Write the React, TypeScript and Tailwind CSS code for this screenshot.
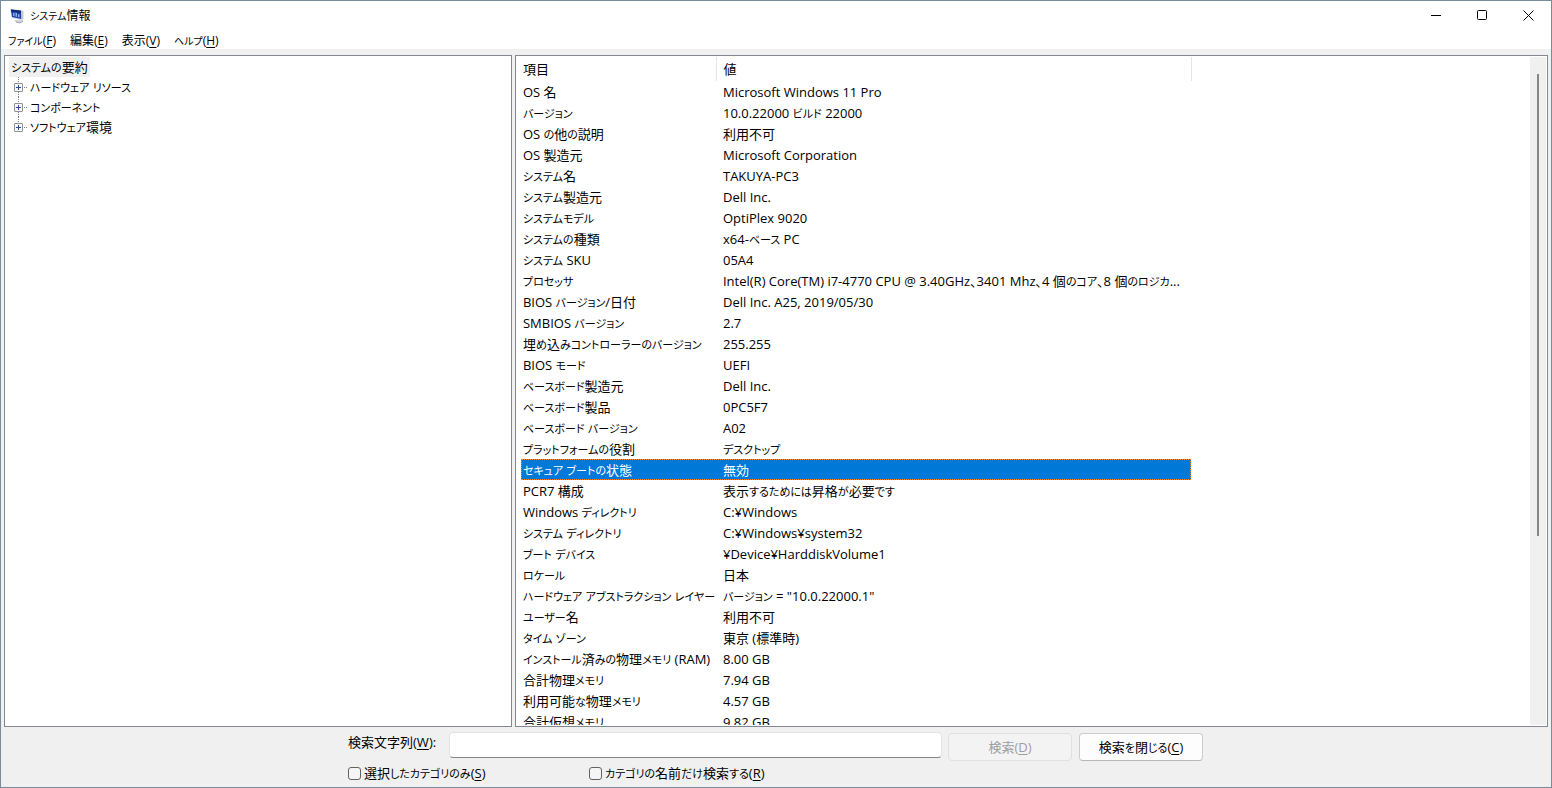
import React from "react";

const specs: [string, string][] = [
  ["OS 名", "Microsoft Windows 11 Pro"],
  ["バージョン", "10.0.22000 ビルド 22000"],
  ["OS の他の説明", "利用不可"],
  ["OS 製造元", "Microsoft Corporation"],
  ["システム名", "TAKUYA-PC3"],
  ["システム製造元", "Dell Inc."],
  ["システムモデル", "OptiPlex 9020"],
  ["システムの種類", "x64-ベース PC"],
  ["システム SKU", "05A4"],
  ["プロセッサ", "Intel(R) Core(TM) i7-4770 CPU @ 3.40GHz、3401 Mhz、4 個のコア、8 個のロジカ..."],
  ["BIOS バージョン/日付", "Dell Inc. A25, 2019/05/30"],
  ["SMBIOS バージョン", "2.7"],
  ["埋め込みコントローラーのバージョン", "255.255"],
  ["BIOS モード", "UEFI"],
  ["ベースボード製造元", "Dell Inc."],
  ["ベースボード製品", "0PC5F7"],
  ["ベースボード バージョン", "A02"],
  ["プラットフォームの役割", "デスクトップ"],
  ["セキュア ブートの状態", "無効"],
  ["PCR7 構成", "表示するためには昇格が必要です"],
  ["Windows ディレクトリ", "C:¥Windows"],
  ["システム ディレクトリ", "C:¥Windows¥system32"],
  ["ブート デバイス", "¥Device¥HarddiskVolume1"],
  ["ロケール", "日本"],
  ["ハードウェア アブストラクション レイヤー", "バージョン = \"10.0.22000.1\""],
  ["ユーザー名", "利用不可"],
  ["タイム ゾーン", "東京 (標準時)"],
  ["インストール済みの物理メモリ (RAM)", "8.00 GB"],
  ["合計物理メモリ", "7.94 GB"],
  ["利用可能な物理メモリ", "4.57 GB"],
  ["合計仮想メモリ", "9.82 GB"],
];

const menus: [string, string][] = [
  ["ファイル", "F"],
  ["編集", "E"],
  ["表示", "V"],
  ["ヘルプ", "H"],
];

const branches = ["ハードウェア リソース", "コンポーネント", "ソフトウェア環境"];

/** Sets kana one step smaller than the kanji and Latin around it. */
function Text({ children, small = false }: { children: string; small?: boolean }) {
  return (
    <>
      {children.split(/([\u3041-\u30ff]+)/).map((run, i) =>
        i % 2 ? (
          <span key={i} className={small ? "text-[10px] leading-none" : "text-[11px] leading-none"}>
            {run}
          </span>
        ) : (
          run
        ),
      )}
    </>
  );
}

function Key({ k }: { k: string }) {
  return (
    <>
      (<span className="underline underline-offset-2">{k}</span>)
    </>
  );
}

function AppIcon() {
  return (
    <svg width="16" height="16" viewBox="0 0 16 16" aria-hidden="true">
      <path d="M12 2l2.5 1v8l-2 1.5z" fill="#c5c9cf" />
      <path d="M5 12l5-.5 4.500 1-3 2.500-5-1z" fill="#d3d5d9" />
      <path d="M7 14l4 1 3-2" stroke="#9aa0a8" fill="none" />
      <path d="M1 .5l11.500 1.500.5 10.500L2.500 10z" fill="#d9dfea" />
      <path d="M2 1.500l10 1.300.3 8.200L3 9z" fill="#1c3ea8" />
      <path d="M2 1.500l10 1.300.1 2L2.300 4z" fill="#10287c" />
      <path d="M4 8V5.500L5.500 4v4.300zM6.500 8.500v-4l1.500.5v4zM9 9V6l1.500.5v3z" fill="#8fb0f2" />
    </svg>
  );
}

function Expander({ last }: { last: boolean }) {
  return (
    <svg width="14" height="20" viewBox="0 0 14 20" aria-hidden="true" className="shrink-0">
      <path
        d={last ? "M4.5 0v6M10 10.5h3" : "M4.5 0v6M4.5 15v5M10 10.5h3"}
        stroke="#808080"
        strokeDasharray="1 1"
        fill="none"
      />
      <rect x="0.5" y="6.5" width="8" height="8" rx="0.5" fill="#f6f6f6" stroke="#919191" />
      <path d="M2 10.5h5M4.5 8v5" stroke="#2b479c" fill="none" />
    </svg>
  );
}

const checkbox =
  "size-[13px] appearance-none rounded-[3px] border border-[#626262] bg-[#f5f5f5] checked:bg-[#0078d7]";

export default function App() {
  return (
    <div className="flex h-screen flex-col overflow-hidden border border-[#7a8b99] bg-[#f0f0f0] font-['Open_Sans','Noto_Sans_CJK_JP',sans-serif] text-[13px] leading-5 text-black [font-feature-settings:'palt']">
      <header className="bg-white">
        <div className="flex h-[30px] items-center justify-between">
          <div className="flex items-center gap-[5px] pl-2 text-xs">
            <AppIcon />
            <h1>
              <Text small>システム情報</Text>
            </h1>
          </div>
          <div className="flex h-7 self-start">
            <button aria-label="最小化" className="flex w-[46px] items-center justify-center">
              <svg width="11" height="11" viewBox="0 0 11 11"><path d="M0 5.5h10" stroke="#000" /></svg>
            </button>
            <button aria-label="最大化" className="flex w-[46px] items-center justify-center">
              <svg width="11" height="11" viewBox="0 0 11 11"><rect x="0.5" y="0.5" width="9" height="9" rx="1" fill="none" stroke="#000" /></svg>
            </button>
            <button aria-label="閉じる" className="flex w-[46px] items-center justify-center">
              <svg width="11" height="11" viewBox="0 0 11 11"><path d="M0.5 0.5l10 10M10.5 0.5l-10 10" stroke="#000" /></svg>
            </button>
          </div>
        </div>
        <nav className="flex h-[18px] items-end gap-3.5 pl-[7px] text-xs leading-4">
          {menus.map(([label, k]) => (
            <button key={k}>
              <Text small>{label}</Text>
              <Key k={k} />
            </button>
          ))}
        </nav>
      </header>

      <main className="flex min-h-0 flex-1 gap-[3px] px-[3px] pt-[6px]">
        <section className="w-[32.9%] border border-[#828790] bg-white pt-px pl-1" aria-label="カテゴリ">
          <ul>
            <li>
              <span className="inline-block bg-[#f0f0f0] px-0.5 align-top">
                <Text>システムの要約</Text>
              </span>
              <ul>
                {branches.map((b, i) => (
                  <li key={b} className="flex h-5 items-center gap-0.5 pl-[5px]">
                    <Expander last={i === branches.length - 1} />
                    <span>
                      <Text>{b}</Text>
                    </span>
                  </li>
                ))}
              </ul>
            </li>
          </ul>
        </section>

        <section className="flex min-w-0 flex-1 border border-[#828790] bg-white p-px" aria-label="詳細">
          <div className="min-w-0 flex-1 overflow-hidden pl-1">
            <table className="w-[671px] table-fixed border-collapse text-left whitespace-nowrap">
              <colgroup>
                <col className="w-[196px]" />
                <col />
              </colgroup>
              <thead>
                <tr className="h-6">
                  <th className="border-r border-[#e5e5e5] p-0 pl-0.5 font-normal">項目</th>
                  <th className="border-r border-[#e5e5e5] p-0 pl-[6px] font-normal">値</th>
                </tr>
              </thead>
              <tbody>
                {specs.map(([name, value], i) => (
                  <tr
                    key={i}
                    className={
                      i === 18
                        ? "h-[21px] bg-[#0078d7] text-white outline-1 -outline-offset-1 outline-dotted outline-[#ff8728]"
                        : "h-[21px]"
                    }
                  >
                    <td className="p-0 pl-0.5">
                      <Text>{name}</Text>
                    </td>
                    <td className="p-0 pl-[6px]">
                      <Text>{value}</Text>
                    </td>
                  </tr>
                ))}
              </tbody>
            </table>
          </div>
          <div className="flex w-4 justify-center bg-[#f0f0f0] pt-[17px]">
            <div className="h-[71%] w-0.5 bg-[#868686]" />
          </div>
        </section>
      </main>

      <form className="mx-auto flex h-[60px] w-[856px] shrink-0 flex-col gap-[2px] pt-[5px]">
        <div className="flex">
          <label htmlFor="query" className="w-[101px]">
            検索文字列
            <Key k="W" />:
          </label>
          <input
            id="query"
            className="h-[26px] min-w-0 flex-1 rounded-sm border border-[#e3e3e3] border-b-[#868686] bg-white px-1"
          />
          <div className="flex gap-[7px] pt-px pr-px pl-[6px]">
            <button
              type="button"
              disabled
              className="h-7 w-[124px] rounded border border-[#e0e0e0] bg-[#f3f3f3] text-[#9d9d9d]"
            >
              検索
              <Key k="D" />
            </button>
            <button
              type="button"
              className="h-7 w-[124px] rounded border border-[#cccccc] border-b-[#b8b8b8] bg-[#fdfdfd]"
            >
              <Text>検索を閉じる</Text>
              <Key k="C" />
            </button>
          </div>
        </div>
        <div className="flex">
          <label className="flex w-[241px] items-center gap-[3px]">
            <input type="checkbox" className={checkbox} />
            <span>
              <Text>選択したカテゴリのみ</Text>
              <Key k="S" />
            </span>
          </label>
          <label className="flex items-center gap-[3px]">
            <input type="checkbox" className={checkbox} />
            <span>
              <Text>カテゴリの名前だけ検索する</Text>
              <Key k="R" />
            </span>
          </label>
        </div>
      </form>
    </div>
  );
}
